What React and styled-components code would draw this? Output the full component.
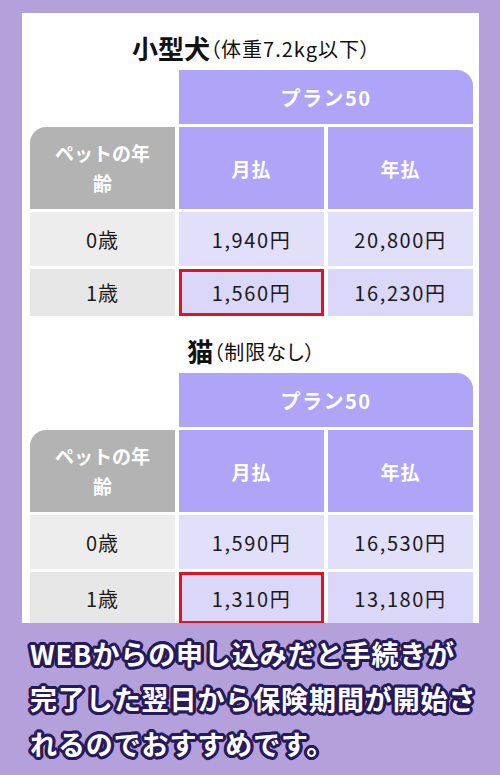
import React from "react";
import styled, { createGlobalStyle } from "styled-components";

const Global = createGlobalStyle`
  html, body { margin: 0; padding: 0; }
  body {
    background: #b4a0db;
    font-family: "Noto Sans CJK JP", "Noto Sans", sans-serif;
    width: 500px;
    height: 775px;
    overflow: hidden;
  }
`;

const Page = styled.div`
  width: 500px;
  height: 775px;
  background: #b4a0db;
  padding-top: 13px;
  box-sizing: border-box;
`;

const Panel = styled.div`
  margin-left: 22px;
  width: 457px;
  height: 610px;
  background: #ffffff;
  overflow: hidden;
  padding-left: 8px;
  box-sizing: border-box;
`;

const Title = styled.div`
  width: 443px;
  height: 57px;
  padding-top: 12px;
  box-sizing: border-box;
  display: flex;
  align-items: center;
  justify-content: center;
  color: #111;
`;

const TitleMain = styled.span`
  font-size: 26px;
  font-weight: 700;
  line-height: 1;
`;

const TitleSub = styled.span`
  font-size: 20px;
  font-weight: 400;
  line-height: 1;
  margin-top: 3px;
  letter-spacing: 1px;
  font-feature-settings: "palt";
`;

const Table = styled.div`
  display: grid;
  grid-template-columns: 145px 145px 145px;
  grid-template-rows: 54px 82px 54px ${(p) => p.$lastRow}px;
  gap: 3px 4px;
  width: 443px;
`;

const PlanHead = styled.div`
  grid-column: 2 / 4;
  background: #afa4f7;
  border-top-right-radius: 16px;
  color: #fff;
  font-size: 20px;
  font-weight: 700;
  display: flex;
  align-items: center;
  justify-content: center;
  letter-spacing: 1.5px;
`;

const Blank = styled.div``;

const AgeHead = styled.div`
  background: #b3b3b3;
  border-top-left-radius: 16px;
  color: #fff;
  font-size: 19px;
  font-weight: 700;
  line-height: 30px;
  display: flex;
  align-items: center;
  justify-content: center;
  text-align: center;
  padding: 0 20px;
  box-sizing: border-box;
`;

const ColHead = styled.div`
  background: #afa4f7;
  color: #fff;
  font-size: 19px;
  font-weight: 700;
  display: flex;
  align-items: center;
  justify-content: center;
  letter-spacing: 1px;
`;

const AgeCell = styled.div`
  background: ${(p) => (p.$alt ? "#e7e7e7" : "#ededed")};
  color: #1a1a1a;
  font-size: 20px;
  letter-spacing: 1px;
  display: flex;
  align-items: center;
  justify-content: center;
`;

const PriceCell = styled.div`
  background: ${(p) => (p.$alt ? "#dbd7f9" : "#e2dffb")};
  color: #1a1a1a;
  font-size: 20px;
  letter-spacing: 1.6px;
  display: flex;
  align-items: center;
  justify-content: center;
  box-sizing: border-box;
  border: ${(p) => (p.$hl ? "3px solid #e4121f" : "none")};
`;

const Caption = styled.div`
  margin: 8px 0 0 30px;
  width: 465px;
  font-size: 27px;
  font-weight: 700;
  line-height: 45px;
  color: #ffffff;
  letter-spacing: 0.9px;
  text-shadow:
    3px 0 0 #271a5a, -3px 0 0 #271a5a, 0 3px 0 #271a5a, 0 -3px 0 #271a5a,
    2px 2px 0 #271a5a, -2px 2px 0 #271a5a, 2px -2px 0 #271a5a, -2px -2px 0 #271a5a,
    3px 1px 0 #271a5a, -3px 1px 0 #271a5a, 3px -1px 0 #271a5a, -3px -1px 0 #271a5a,
    1px 3px 0 #271a5a, -1px 3px 0 #271a5a, 1px -3px 0 #271a5a, -1px -3px 0 #271a5a;
`;

const Line = styled.div`
  white-space: nowrap;
`;

function PriceTable({ rows, lastRow }) {
  return (
    <Table $lastRow={lastRow}>
      <Blank />
      <PlanHead>プラン50</PlanHead>
      <AgeHead>ペットの年齢</AgeHead>
      <ColHead>月払</ColHead>
      <ColHead>年払</ColHead>
      {rows.map((r, i) => (
        <React.Fragment key={r.age}>
          <AgeCell $alt={i === 1}>{r.age}</AgeCell>
          <PriceCell $alt={i === 1} $hl={i === 1}>{r.month}</PriceCell>
          <PriceCell $alt={i === 1}>{r.year}</PriceCell>
        </React.Fragment>
      ))}
    </Table>
  );
}

export default function App() {
  return (
    <>
      <Global />
      <Page>
        <Panel>
          <Title>
            <TitleMain>小型犬</TitleMain>
            <TitleSub>（体重7.2kg以下）</TitleSub>
          </Title>
          <PriceTable
            lastRow={47}
            rows={[
              { age: "0歳", month: "1,940円", year: "20,800円" },
              { age: "1歳", month: "1,560円", year: "16,230円" },
            ]}
          />
          <Title>
            <TitleMain>猫</TitleMain>
            <TitleSub>（制限なし）</TitleSub>
          </Title>
          <PriceTable
            lastRow={52}
            rows={[
              { age: "0歳", month: "1,590円", year: "16,530円" },
              { age: "1歳", month: "1,310円", year: "13,180円" },
            ]}
          />
        </Panel>
        <Caption>
          <Line>WEBからの申し込みだと手続きが</Line>
          <Line>完了した翌日から保険期間が開始さ</Line>
          <Line>れるのでおすすめです。</Line>
        </Caption>
      </Page>
    </>
  );
}
